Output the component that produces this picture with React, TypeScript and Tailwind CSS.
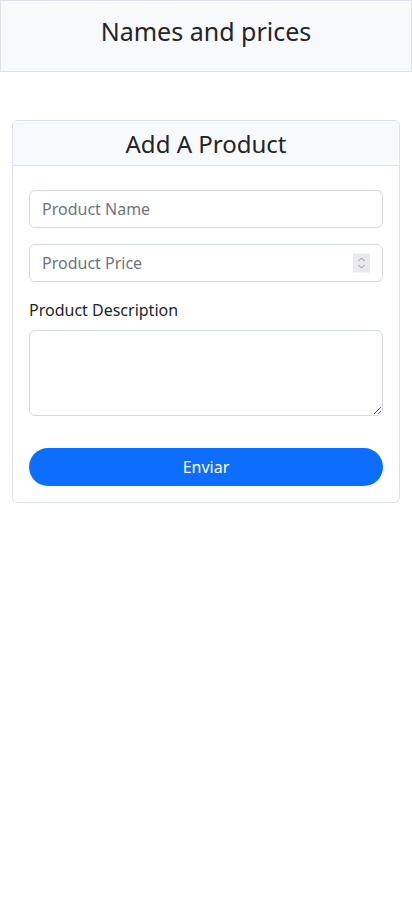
import React from 'react';

function Spinner() {
    return (
        <span className="absolute right-[13px] top-1/2 -translate-y-1/2 flex h-[19px] w-[17px] items-center justify-center bg-[#e9e9ed]">
            <svg width="9" height="13" viewBox="0 0 9 13" fill="none" stroke="#8f8f9d" strokeWidth="1">
                <path d="M1.5 4.5 L4.5 1.5 L7.5 4.5" />
                <path d="M1.5 8.5 L4.5 11.5 L7.5 8.5" />
            </svg>
        </span>
    );
}

export default function App() {
    const font = { fontFamily: '"Noto Sans", "Open Sans", sans-serif' };

    return (
        <div className="min-h-[915px] bg-white text-[#212529]" style={font}>
            {/* topo */}
            <header className="border border-[#dee2e6] bg-[#f8f9fa] h-[72px] flex items-center justify-center pb-[10px]">
                <h2 className="text-[25px] leading-[30px] font-normal">Names and prices</h2>
            </header>

            <main className="px-3 pt-12">
                <div className="rounded-[6px] border border-[#dee2e6] bg-white overflow-hidden">
                    <div className="border-b border-[#dee2e6] bg-[#f8f9fa] px-4 h-[45px] flex items-center justify-center">
                        <h3 className="text-[24px] leading-[29px]">Add A Product</h3>
                    </div>

                    <form className="px-4 pt-6 pb-4 flex flex-col" onSubmit={(e) => e.preventDefault()}>
                        <input
                            type="text"
                            placeholder="Product Name"
                            className="h-[38px] w-full rounded-[6px] border border-[#d6d9dd] px-3 text-base placeholder:text-[#6c757d] outline-none"
                        />

                        <div className="relative mt-4">
                            <input
                                type="text"
                                placeholder="Product Price"
                                className="h-[38px] w-full rounded-[6px] border border-[#d6d9dd] px-3 text-base placeholder:text-[#6c757d] outline-none"
                            />
                            <Spinner />
                        </div>

                        <label className="mt-4 mb-2 text-base leading-6">Product Description</label>
                        <textarea className="h-[86px] w-full rounded-[6px] border border-[#d6d9dd] px-3 py-1.5 text-base outline-none" />

                        <button
                            type="submit"
                            className="mt-8 h-[38px] w-full rounded-full bg-[#0d6efd] text-base text-white"
                        >
                            Enviar
                        </button>
                    </form>
                </div>
            </main>
        </div>
    );
}
